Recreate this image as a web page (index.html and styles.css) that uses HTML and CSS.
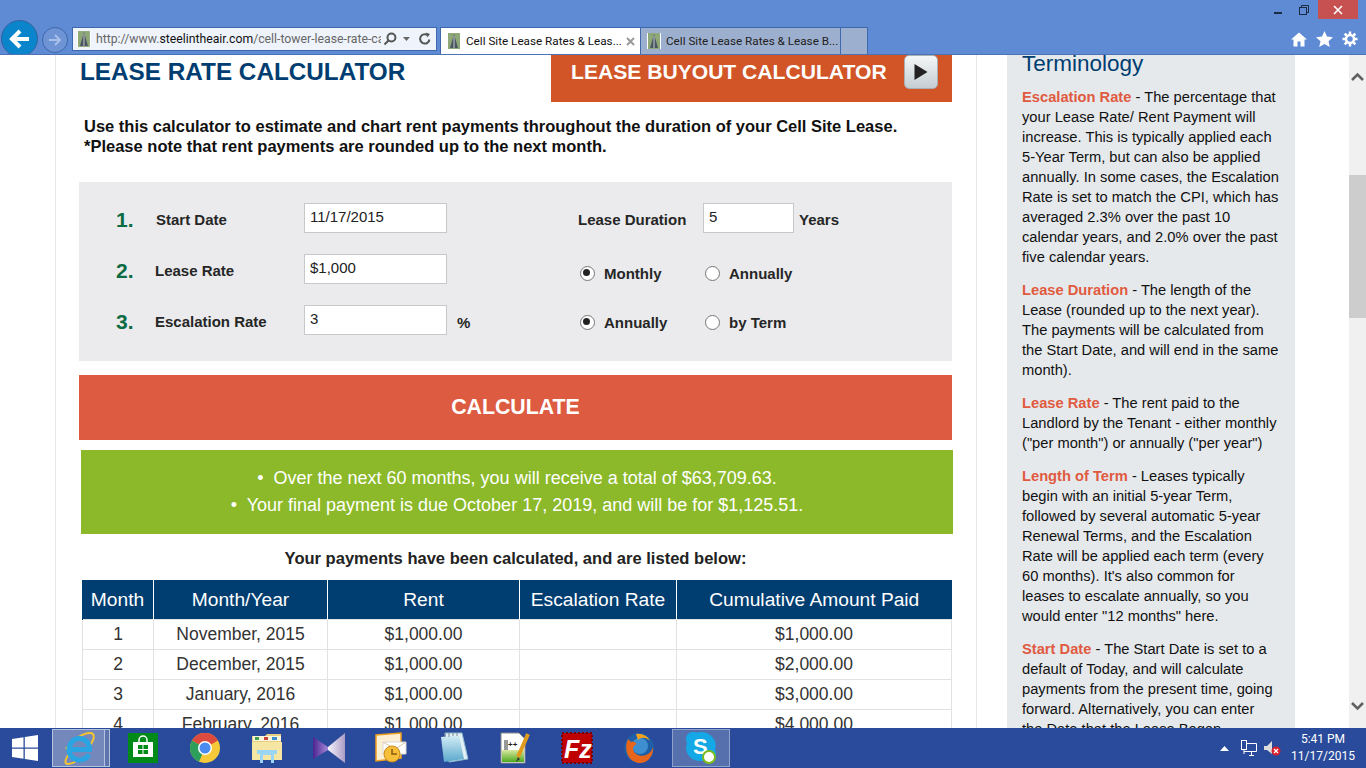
FILE: index.html
```html
<!DOCTYPE html>
<html lang="en">
<head>
    <meta charset="UTF-8">
    <title>Cell Site Lease Rates &amp; Lease Buyout</title>
    <link rel="stylesheet" href="styles.css">
</head>
<body>
    <svg class="defs" width="0" height="0">
        <symbol id="favicon" viewBox="0 0 14 16">
            <rect width="14" height="16" fill="#fff"/>
            <rect x="1" y="0" width="12" height="16" fill="#8fa878"/>
            <path d="M7 1 L9 8 L11 15 H3 L5 8 Z" fill="#4a5560"/>
            <path d="M7 3 L7 15" stroke="#c4ccd0" stroke-width="1"/>
        </symbol>
        <linearGradient id="vs-left" x1="0" y1="0" x2="1" y2="0">
            <stop offset="0" stop-color="#4c2390"/>
            <stop offset="1" stop-color="#a488d8"/>
        </linearGradient>
        <linearGradient id="vs-right" x1="0" y1="0" x2="1" y2="0">
            <stop offset="0" stop-color="#f6f3fb"/>
            <stop offset="1" stop-color="#a99cc4"/>
        </linearGradient>
        <linearGradient id="npp-green" x1="0" y1="0" x2="0" y2="1">
            <stop offset="0" stop-color="#d8e8a0"/>
            <stop offset="1" stop-color="#4ea81e"/>
        </linearGradient>
        <linearGradient id="note-blue" x1="0" y1="0" x2="0" y2="1">
            <stop offset="0" stop-color="#d6eef6"/>
            <stop offset="1" stop-color="#5aa8cc"/>
        </linearGradient>
    </svg>

    <header class="browser">
        <div class="title-row">
            <div class="win-btn">
                <svg width="12" height="12" viewBox="0 0 12 12"><rect x="2" y="8" width="8" height="2" fill="#1c2b44"/></svg>
            </div>
            <div class="win-btn">
                <svg width="12" height="12" viewBox="0 0 12 12" fill="none" stroke="#1c2b44"><rect x="1.5" y="3.5" width="7" height="7"/><path d="M3.5 3.5V1.5H10.5V8.5H8.5"/></svg>
            </div>
            <div class="win-close">
                <svg width="12" height="12" viewBox="0 0 12 12" stroke="#fff" stroke-width="1.6"><path d="M2 2L10 10M10 2L2 10"/></svg>
            </div>
        </div>
        <div class="nav-row">
            <div class="back-btn">
                <svg width="24" height="22" viewBox="0 0 24 22" fill="none" stroke="#fff" stroke-width="4"><path d="M21 11H4M12 3L4 11L12 19"/></svg>
            </div>
            <div class="forward-btn">
                <svg width="14" height="14" viewBox="0 0 14 14" fill="none" stroke="#a9c0e8" stroke-width="2"><path d="M1 7H12M7 2L12 7L7 12"/></svg>
            </div>
            <div class="address-bar">
                <svg class="fav" width="14" height="16"><use href="#favicon"/></svg>
                <span class="url">http://www.<b>steelintheair.com</b>/cell-tower-lease-rate-ca</span>
                <svg class="addr-icon" width="14" height="14" viewBox="0 0 14 14" fill="none" stroke="#555" stroke-width="2"><circle cx="8.5" cy="5.5" r="4"/><path d="M5.5 8.5L1.5 12.5"/></svg>
                <svg class="addr-caret" width="7" height="4" viewBox="0 0 7 4"><path d="M0 0H7L3.5 4Z" fill="#666"/></svg>
                <svg class="addr-icon" width="14" height="14" viewBox="0 0 14 14" fill="none" stroke="#555" stroke-width="2"><path d="M11.5 7.5A4.7 4.7 0 1 1 9.5 3"/><path d="M8 0.5L12 2L9.5 5.5Z" fill="#555" stroke="none"/></svg>
            </div>
            <div class="tab tab-active">
                <svg class="fav" width="14" height="16"><use href="#favicon"/></svg>
                <span class="tab-title">Cell Site Lease Rates &amp; Leas...</span>
                <svg width="9" height="9" viewBox="0 0 9 9" stroke="#9a9a9a" stroke-width="2"><path d="M1 1L8 8M8 1L1 8"/></svg>
            </div>
            <div class="tab">
                <svg class="fav" width="14" height="16"><use href="#favicon"/></svg>
                <span class="tab-title">Cell Site Lease Rates &amp; Lease B...</span>
            </div>
            <div class="tab-new"></div>
            <div class="tools">
                <svg width="16" height="15" viewBox="0 0 16 15" fill="#fff"><path d="M8 0.5L16 7.5H13.5V14.5H9.5V9.5H6.5V14.5H2.5V7.5H0Z"/></svg>
                <svg width="17" height="16" viewBox="0 0 17 16" fill="#fff"><path d="M8.5 0L11 5.6L17 6.2L12.5 10.2L13.8 16L8.5 13L3.2 16L4.5 10.2L0 6.2L6 5.6Z"/></svg>
                <svg width="16" height="16" viewBox="0 0 16 16" fill="none" stroke="#fff"><circle cx="8" cy="8" r="4" stroke-width="2.5"/><path d="M8 0.5V3M8 13V15.5M0.5 8H3M13 8H15.5M2.7 2.7L4.5 4.5M11.5 11.5L13.3 13.3M13.3 2.7L11.5 4.5M4.5 11.5L2.7 13.3" stroke-width="2.5"/></svg>
            </div>
        </div>
    </header>

    <div class="viewport">
        <main class="main">
            <div class="top-row">
                <h1>LEASE RATE CALCULATOR</h1>
                <a class="buyout">
                    <span class="buyout-text">LEASE BUYOUT CALCULATOR</span>
                    <span class="play"><svg width="14" height="16" viewBox="0 0 14 16"><path d="M0.5 0L13.5 8L0.5 16Z" fill="#222"/></svg></span>
                </a>
            </div>
            <p class="intro">Use this calculator to estimate and chart rent payments throughout the duration of your Cell Site Lease.<br>*Please note that rent payments are rounded up to the next month.</p>

            <form class="calc-form">
                <div class="form-row">
                    <span class="num">1.</span>
                    <label class="lbl lbl-first">Start Date</label>
                    <input class="field" type="text" value="11/17/2015">
                    <span class="unit"></span>
                    <label class="lbl lbl-dur">Lease Duration</label>
                    <input class="field field-short" type="text" value="5">
                    <span class="years">Years</span>
                </div>
                <div class="form-row">
                    <span class="num">2.</span>
                    <label class="lbl">Lease Rate</label>
                    <input class="field" type="text" value="$1,000">
                    <span class="unit"></span>
                    <div class="radios radios-low">
                        <span class="radio radio-on">Monthly</span>
                        <span class="radio">Annually</span>
                    </div>
                </div>
                <div class="form-row">
                    <span class="num">3.</span>
                    <label class="lbl">Escalation Rate</label>
                    <input class="field" type="text" value="3">
                    <span class="unit">%</span>
                    <div class="radios">
                        <span class="radio radio-on">Annually</span>
                        <span class="radio">by Term</span>
                    </div>
                </div>
            </form>

            <button class="calc-btn" type="button">CALCULATE</button>

            <div class="result">
                <div>&bull;&nbsp; Over the next 60 months, you will receive a total of $63,709.63.</div>
                <div>&bull;&nbsp; Your final payment is due October 17, 2019, and will be for $1,125.51.</div>
            </div>

            <p class="listed">Your payments have been calculated, and are listed below:</p>

            <table class="payments">
                <thead>
                    <tr>
                        <th class="c1">Month</th>
                        <th class="c2">Month/Year</th>
                        <th class="c3">Rent</th>
                        <th class="c4">Escalation Rate</th>
                        <th class="c5">Cumulative Amount Paid</th>
                    </tr>
                </thead>
                <tbody>
                    <tr><td>1</td><td>November, 2015</td><td>$1,000.00</td><td></td><td>$1,000.00</td></tr>
                    <tr><td>2</td><td>December, 2015</td><td>$1,000.00</td><td></td><td>$2,000.00</td></tr>
                    <tr><td>3</td><td>January, 2016</td><td>$1,000.00</td><td></td><td>$3,000.00</td></tr>
                    <tr><td>4</td><td>February, 2016</td><td>$1,000.00</td><td></td><td>$4,000.00</td></tr>
                </tbody>
            </table>
        </main>

        <aside class="terms">
            <h2>Terminology</h2>
            <p><b>Escalation Rate</b> - The percentage that your Lease Rate/ Rent Payment will increase. This is typically applied each 5-Year Term, but can also be applied annually. In some cases, the Escalation Rate is set to match the CPI, which has averaged 2.3% over the past 10 calendar years, and 2.0% over the past five calendar years.</p>
            <p><b>Lease Duration</b> - The length of the Lease (rounded up to the next year). The payments will be calculated from the Start Date, and will end in the same month).</p>
            <p><b>Lease Rate</b> - The rent paid to the Landlord by the Tenant - either monthly ("per month") or annually ("per year")</p>
            <p><b>Length of Term</b> - Leases typically begin with an initial 5-year Term, followed by several automatic 5-year Renewal Terms, and the Escalation Rate will be applied each term (every 60 months). It's also common for leases to escalate annually, so you would enter "12 months" here.</p>
            <p><b>Start Date</b> - The Start Date is set to a default of Today, and will calculate payments from the present time, going forward. Alternatively, you can enter<br>the Date that the Lease Began.</p>
        </aside>

        <div class="scrollbar">
            <svg class="arrow" width="17" height="10" viewBox="0 0 17 10" fill="none" stroke="#606060" stroke-width="2.5"><path d="M3 8L8.5 2.5L14 8"/></svg>
            <div class="thumb"></div>
            <svg class="arrow" width="17" height="10" viewBox="0 0 17 10" fill="none" stroke="#606060" stroke-width="2.5"><path d="M3 2L8.5 7.5L14 2"/></svg>
        </div>
    </div>

    <footer class="taskbar">
        <div class="start">
            <svg width="26" height="26" viewBox="0 0 26 26" fill="#fff"><path d="M0 4L11.5 2.3V12.5H0ZM12.8 2.1L26 0V12.5H12.8ZM0 13.7H11.5V23.8L0 22ZM12.8 13.7H26V26L12.8 24Z"/></svg>
        </div>
        <div class="task task-ie">
            <svg width="32" height="33" viewBox="0 0 32 33" fill="none">
                <path d="M3 17C9 8 20 1 27 1C32 1 32 7 27 13" stroke="#f4c52c" stroke-width="2"/>
                <path d="M6 22C2 27 1 32 5 32C8 32 12 30 15 28" stroke="#f4c52c" stroke-width="2"/>
                <path d="M6 17.5H26.5C26.5 11 22 6.5 16.5 6.5C10.5 6.5 6 11.5 6 17.5C6 23.5 10.5 28 16.5 28C20.5 28 24 26 26 22.5" stroke="#28a5e2" stroke-width="5"/>
            </svg>
        </div>
        <div class="task-edge"></div>
        <div class="task">
            <svg width="30" height="30" viewBox="0 0 30 30">
                <rect width="30" height="30" fill="#008a17"/>
                <path d="M11 9V7A4 4 0 0 1 19 7V9" stroke="#fff" stroke-width="1.5" fill="none"/>
                <path d="M5 9H25V24H5Z" fill="#fff"/>
                <path d="M10 12H14.5V16H10ZM15.5 12H20V16H15.5ZM10 17H14.5V21H10ZM15.5 17H20V21H15.5Z" fill="#008a17"/>
            </svg>
        </div>
        <div class="task">
            <svg width="30" height="30" viewBox="0 0 30 30">
                <circle cx="15" cy="15" r="15" fill="#f5c93a"/>
                <path d="M15 15L2 7.5A15 15 0 0 1 28 7.5Z" fill="#dd4b3e"/>
                <path d="M15 15L2 7.5A15 15 0 0 0 9 28.8L15 15Z" fill="#2e9e5b"/>
                <circle cx="15" cy="15" r="7" fill="#fff"/>
                <circle cx="15" cy="15" r="5.5" fill="#4a8bf0"/>
            </svg>
        </div>
        <div class="task">
            <svg width="32" height="30" viewBox="0 0 32 30">
                <path d="M1 3H14L16 1H30V26H1Z" fill="#e6cf84"/>
                <path d="M2 3H30V8H2Z" fill="#fdf6d8"/>
                <path d="M4 4H8V7H4Z" fill="#3aa34a"/>
                <path d="M13 4H17V7H13Z" fill="#c9403a"/>
                <path d="M21 4H26V7H21Z" fill="#3a8fd0"/>
                <path d="M1 9H31V27H1Z" fill="#f6e6a4"/>
                <path d="M6 17H26V21H23V30H20V22H12V30H9V21H6Z" fill="#9ad6f4"/>
            </svg>
        </div>
        <div class="task">
            <svg width="32" height="30" viewBox="0 0 32 30">
                <path d="M0 4L15 14V17L0 26Z" fill="url(#vs-left)"/>
                <path d="M15 14L32 0V30L15 17Z" fill="url(#vs-right)"/>
            </svg>
        </div>
        <div class="task">
            <svg width="32" height="32" viewBox="0 0 32 32">
                <path d="M1 3L26 1V26L1 29Z" fill="#fdf0d2" stroke="#ef9f1a" stroke-width="1.5"/>
                <path d="M8 10H31V22H8Z" fill="#fff" stroke="#d8d8d8"/>
                <path d="M8 10L20 17L31 10" fill="none" stroke="#d8c8a0"/>
                <circle cx="17" cy="22" r="8" fill="#f6bf3a" stroke="#c98a1a"/>
                <path d="M17 17V22H22" stroke="#8a5a10" stroke-width="1.5" fill="none"/>
            </svg>
        </div>
        <div class="task">
            <svg width="32" height="32" viewBox="0 0 32 32">
                <path d="M8 1H25L31 27L12 30Z" fill="#e2f0f6" stroke="#8cb8cc"/>
                <path d="M4 5L22 3L27 27L7 30Z" fill="url(#note-blue)"/>
                <path d="M8 1V5M12 1V5M16 1V4M20 1V4" stroke="#7a8a94"/>
            </svg>
        </div>
        <div class="task">
            <svg width="30" height="32" viewBox="0 0 30 32">
                <path d="M1 1H19L25 7V31H1Z" fill="#fff" stroke="#8a8a8a"/>
                <path d="M2 18H24V30H2Z" fill="url(#npp-green)"/>
                <text class="npp" x="8" y="15">++</text>
                <path d="M5 8V18M7 8V18" stroke="#333"/>
                <path d="M28 2L18 25" stroke="#e09a1c" stroke-width="4"/>
                <path d="M18 25L16 30L20 27Z" fill="#333"/>
            </svg>
        </div>
        <div class="task">
            <svg width="32" height="32" viewBox="0 0 32 32">
                <rect x="1" y="1" width="30" height="30" fill="#bf0000" stroke="#7d0000" stroke-dasharray="2 2" stroke-width="2"/>
                <text class="fz" x="3" y="26">Fz</text>
            </svg>
        </div>
        <div class="task">
            <svg width="30" height="30" viewBox="0 0 30 30">
                <circle cx="15" cy="15" r="15" fill="#1f5fa8"/>
                <circle cx="16" cy="13" r="8" fill="#3f8fd0"/>
                <path d="M4 6C0 14 2 27 14 30C24 31 30 22 29 14C27 22 18 25 12 21C8 18 8 12 13 11C10 8 8 8 7 9Z" fill="#e8651c"/>
                <path d="M12 1C18 0 24 3 26 8C22 4 17 4 14 7Z" fill="#f4a21e"/>
            </svg>
        </div>
        <div class="task task-skype">
            <svg width="32" height="32" viewBox="0 0 32 32">
                <path d="M8 0C4 0 1 3 1 7C1 8.5 1.5 10 2 11C1.5 12.5 1 14 1 15.5C1 23 7 29 15 29C17 29 18.5 28.5 20 28C21 28.7 22.5 29 24 29C28 29 31 26 31 22C31 20.5 30.5 19 30 18C30.5 16.5 30.7 15 30.7 13.5C30.7 6 24 0 16 0C14.5 0 13.5 0.3 12 0.8C11 0.3 9.5 0 8 0Z" fill="#15a8e6"/>
                <text class="sk" x="8" y="22">S</text>
                <circle cx="24" cy="25" r="6" fill="#fff" stroke="#7cbb1a" stroke-width="2"/>
            </svg>
        </div>
        <div class="tray">
            <svg class="tray-caret" width="9" height="5" viewBox="0 0 9 5"><path d="M0 5L4.5 0L9 5Z" fill="#fff"/></svg>
            <svg class="tray-net" width="16" height="16" viewBox="0 0 16 16" fill="none" stroke="#fff"><rect x="0.5" y="0.5" width="5" height="9"/><path d="M3 9.5V14M5.5 3.5H15.5V11.5H3M8 15.5H13M10.5 11.5V15"/></svg>
            <svg class="tray-vol" width="17" height="15" viewBox="0 0 17 15"><path d="M0 5H3L8 0V13L3 9H0Z" fill="#ddd"/><circle cx="12" cy="10" r="4.5" fill="#d9202c"/><path d="M10 8L14 12M14 8L10 12" stroke="#fff" stroke-width="1.3"/></svg>
            <div class="clock">
                <div>5:41 PM</div>
                <div>11/17/2015</div>
            </div>
        </div>
    </footer>
</body>
</html>
```

FILE: styles.css
```css
* {
    margin: 0;
    padding: 0;
    box-sizing: border-box;
}

html, body {
    width: 1366px;
    height: 768px;
    overflow: hidden;
}

body {
    display: flex;
    flex-direction: column;
    font-family: "Liberation Sans", Arial, sans-serif;
    color: #222;
    background: #fff;
}

.defs {
    position: absolute;
}

/* browser chrome */
.browser {
    height: 55px;
    flex: none;
    background: #5f8ad4;
    border-bottom: 1px solid #4a72b5;
    overflow: hidden;
}

.title-row {
    height: 27px;
    display: flex;
    justify-content: flex-end;
    align-items: flex-start;
    padding-right: 8px;
}

.win-btn {
    width: 26px;
    height: 19px;
    display: flex;
    align-items: center;
    justify-content: center;
}

.win-close {
    width: 40px;
    height: 19px;
    margin-left: 1px;
    background: #c75050;
    display: flex;
    align-items: center;
    justify-content: center;
}

.nav-row {
    height: 27px;
    display: flex;
    font-family: Roboto, sans-serif;
    font-size: 12.25px;
    position: relative;
}

.back-btn {
    position: absolute;
    left: 1px;
    top: -7px;
    width: 37px;
    height: 37px;
    border-radius: 50%;
    background: #0a85cc;
    border: 1px solid #36619f;
    display: flex;
    align-items: center;
    justify-content: center;
}

.forward-btn {
    position: absolute;
    left: 42px;
    top: 0;
    width: 26px;
    height: 26px;
    border-radius: 50%;
    background: #6e94d6;
    border: 1px solid #3f68ab;
    display: flex;
    align-items: center;
    justify-content: center;
}

.address-bar {
    margin-left: 72px;
    width: 365px;
    height: 24px;
    background: #eff4fc;
    border: 1px solid #3f68ab;
    display: flex;
    align-items: center;
    padding: 0 4px;
    color: #666;
}

.address-bar b {
    font-weight: 400;
    color: #111;
}

.url {
    width: 287px;
    margin-left: 5px;
    white-space: nowrap;
    overflow: hidden;
}

.addr-icon {
    margin-left: 2px;
}

.addr-caret {
    margin: 0 6px;
}

.tab {
    width: 201px;
    height: 27px;
    margin-left: -1px;
    background: #9dafce;
    border: 1px solid #3f68ab;
    border-bottom: 0;
    display: flex;
    align-items: center;
    padding-left: 6px;
    gap: 5px;
    font-size: 11.7px;
    color: #222;
    white-space: nowrap;
}

.tab-active {
    margin-left: 3px;
    background: #fff;
    color: #111;
}

.tab-title {
    flex: 1;
    overflow: hidden;
}

.tab-active svg:last-child {
    margin-right: 5px;
}

.tab-new {
    width: 28px;
    height: 27px;
    margin-left: -1px;
    background: #9dafce;
    border: 1px solid #3f68ab;
    border-bottom: 0;
}

.tools {
    margin-left: auto;
    padding-right: 8px;
    height: 24px;
    display: flex;
    align-items: center;
    gap: 9px;
}

/* page */
.viewport {
    height: 673px;
    flex: none;
    display: flex;
    overflow: hidden;
}

.main {
    width: 922px;
    margin-left: 55px;
    padding-left: 23px;
    padding-right: 24px;
    border-left: 1px solid #e6e6e6;
    border-right: 1px solid #e6e6e6;
}

.top-row {
    height: 47px;
    display: flex;
    justify-content: space-between;
}

h1 {
    margin-left: 1px;
    font-size: 24.3px;
    line-height: 33px;
    color: #003d70;
}

.buyout {
    width: 401px;
    background: #d15527;
    color: #fff;
    font-size: 21.1px;
    font-weight: 700;
    display: flex;
    align-items: flex-start;
    padding-left: 20px;
    line-height: 33px;
}

.buyout-text {
    width: 333px;
    white-space: nowrap;
}

.play {
    width: 34px;
    height: 34px;
    border: 1px solid #a6b0b5;
    border-radius: 5px;
    background: linear-gradient(#f5f7f7, #c4ced2);
    display: flex;
    align-items: center;
    justify-content: center;
}

.intro {
    margin: 14px 0 26px 5px;
    font-size: 16.5px;
    line-height: 20px;
    font-weight: 700;
    color: #111;
    white-space: nowrap;
}

.calc-form {
    height: 179px;
    background: #ebebed;
    padding: 21px 0 0 37px;
    display: flex;
    flex-direction: column;
    gap: 21px;
}

.form-row {
    height: 30px;
    display: flex;
    align-items: center;
    font-size: 15px;
    font-weight: 700;
    color: #262626;
}

.num {
    width: 39px;
    padding-top: 3px;
    font-size: 21px;
    color: #0b6b43;
}

.lbl {
    width: 149px;
    padding-top: 2px;
}

.lbl-first {
    margin-left: 1px;
    width: 148px;
}

.lbl-dur {
    width: 125px;
}

.field {
    width: 143px;
    height: 30px;
    border: 1px solid #c6c8cc;
    padding: 0 5px 3px;
    font: 15px "Liberation Sans", Arial, sans-serif;
    color: #222;
}

.field-short {
    width: 91px;
}

.unit {
    width: 131px;
    padding-left: 10px;
    padding-top: 4px;
}

.years {
    margin-left: 5px;
    padding-top: 2px;
}

.radios {
    display: flex;
    padding-top: 4px;
}

.radios-low {
    padding-top: 8px;
}

.radio {
    width: 125px;
    padding-left: 26px;
    position: relative;
}

/* radio dot drawn over the label's left edge */
.radio::before {
    content: "";
    position: absolute;
    left: 2px;
    top: 1px;
    width: 13px;
    height: 13px;
    border-radius: 50%;
    background: #fff;
    border: 1px solid #777;
}

.radio-on::after {
    content: "";
    position: absolute;
    left: 5px;
    top: 4px;
    width: 7px;
    height: 7px;
    border-radius: 50%;
    background: #222;
}

.calc-btn {
    display: block;
    width: 873px;
    height: 65px;
    margin-top: 14px;
    border: 0;
    background: #dd5b41;
    color: #fff;
    font: 700 21.3px "Liberation Sans", Arial, sans-serif;
}

.result {
    width: 872px;
    height: 84px;
    margin: 10px 0 0 2px;
    background: #8bb92a;
    color: #fff;
    font-size: 18px;
    line-height: 27px;
    text-align: center;
    padding-top: 15px;
}

.listed {
    margin-top: 14px;
    height: 20px;
    text-align: center;
    font-size: 16.55px;
    line-height: 21px;
    font-weight: 700;
    color: #222;
}

.payments {
    width: 870px;
    margin: 12px 0 0 3px;
    border-collapse: collapse;
    table-layout: fixed;
    font-size: 17.5px;
    text-align: center;
    color: #333;
}

.payments th {
    height: 39px;
    padding-top: 1px;
    background: #003d70;
    color: #fff;
    font-size: 19.2px;
    font-weight: 400;
    border-left: 1px solid #fff;
}

.payments th:first-child {
    padding-right: 1px;
    border-left-color: #003d70;
}

.payments td {
    height: 30px;
    padding-top: 1px;
    border: 1px solid #e2e2e2;
}

.c1 { width: 71px; }
.c2 { width: 174px; }
.c3 { width: 192px; }
.c4 { width: 157px; }

/* sidebar */
.terms {
    width: 288px;
    flex: none;
    margin-left: 30px;
    background: #e6e9ec;
    padding: 0 14px 0 15px;
    font-size: 14.7px;
    line-height: 20px;
    color: #111;
}

.terms h2 {
    font-size: 22.5px;
    font-weight: 400;
    line-height: 20px;
    color: #003d70;
    margin: -1px 0 13px;
}

.terms p {
    margin-bottom: 13px;
}

.terms b {
    color: #e05a3f;
}

.scrollbar {
    width: 17px;
    flex: none;
    margin-left: 54px;
    background: #f0f0f0;
    display: flex;
    flex-direction: column;
    align-items: center;
    justify-content: space-between;
    padding: 17px 0;
}

.thumb {
    width: 17px;
    height: 143px;
    margin-top: 93px;
    margin-bottom: auto;
    background: #cdcdcd;
}

/* taskbar */
.taskbar {
    height: 40px;
    flex: none;
    background: #2a4b9b;
    display: flex;
    align-items: center;
    position: relative;
    color: #fff;
}

.start {
    width: 52px;
    padding-left: 12px;
    display: flex;
}

.task {
    width: 62px;
    display: flex;
    justify-content: center;
}

.task-ie {
    width: 53px;
    height: 38px;
    align-items: center;
    background: #7488bc;
    border: 1px solid #b5c2dd;
}

.task-edge {
    width: 5px;
    height: 38px;
    border: 1px solid #b5c2dd;
    border-left: 0;
    background: #5e74ad;
    margin-right: 2px;
}

.task-skype {
    width: 58px;
    height: 38px;
    margin-left: 2px;
    align-items: center;
    background: #5670ad;
    border: 1px solid #8fa2cc;
}

.npp {
    font: 700 8px "Liberation Sans", sans-serif;
    fill: #222;
}

.fz {
    font: italic 700 25px "Liberation Sans", sans-serif;
    fill: #fff;
}

.sk {
    font: 700 22px "Liberation Sans", sans-serif;
    fill: #fff;
}

.tray {
    margin-left: auto;
    display: flex;
    align-items: center;
    padding-right: 7px;
}

.tray-net {
    margin-left: 12px;
}

.tray-vol {
    margin-left: 7px;
}

.clock {
    width: 72px;
    margin-left: 6px;
    text-align: center;
    font-family: Roboto, sans-serif;
    font-size: 12px;
    line-height: 17px;
}
```
